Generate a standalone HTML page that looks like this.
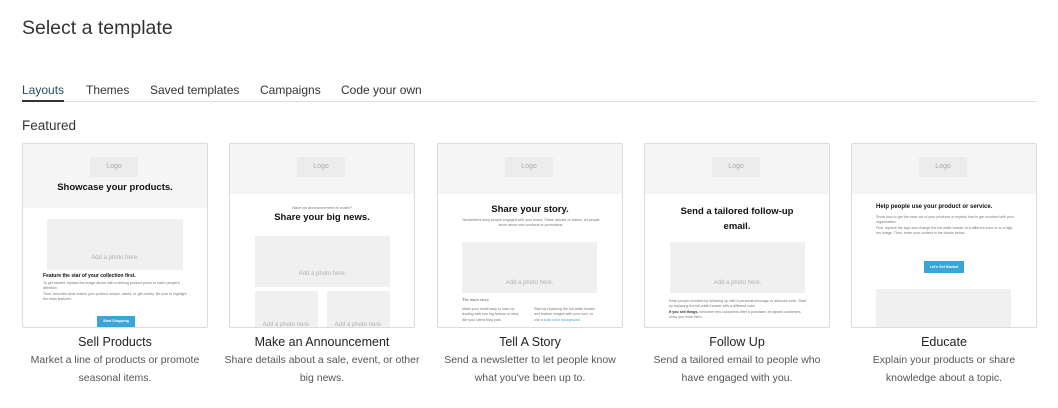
<!DOCTYPE html>
<html><head><meta charset="utf-8"><style>
*{box-sizing:border-box;margin:0;padding:0}
body{width:1058px;height:408px;background:#fff;font-family:"Liberation Sans",sans-serif;color:#333;position:relative;overflow:hidden}
h1{position:absolute;left:22px;top:17px;font-size:19.5px;font-weight:normal;color:#333}
.tabs{position:absolute;left:22px;top:83px;font-size:12px;color:#333}
.tabs span{position:absolute;white-space:nowrap}
.line{position:absolute;left:22px;top:101px;width:1014px;height:1px;background:#ddd}
.ul{position:absolute;left:22px;top:100px;width:42px;height:2px;background:#333}
.feat{position:absolute;left:22px;top:118px;font-size:13.5px;color:#333}
.card{position:absolute;top:143px;width:186px;height:185px;border:1px solid #dcdcdc;border-radius:2px;overflow:hidden;background:#fff;box-shadow:0 0 1px #eee}
.hd{position:absolute;left:0;top:0;width:100%;height:50px;background:#f5f5f5}
.logo{position:absolute;left:67px;top:13px;width:48px;height:20px;background:#ececec;color:#aaa;font-size:7px;text-align:center;line-height:20px}
.t{position:absolute;left:0;width:100%;text-align:center;font-weight:bold;color:#111}
.ph{position:absolute;background:#f0f0f0;color:#b0b0b0;font-size:6px;text-align:center}
.small{position:absolute;font-size:3.6px;color:#777;line-height:5.3px}
.btn{position:absolute;background:#3aa5d8;color:#fff;font-size:3.6px;font-weight:bold;text-align:center}
.cap{position:absolute;top:333px;width:186px;text-align:center}
.cap b{display:block;font-weight:normal;font-size:12.5px;color:#222;line-height:18px}
.cap p{font-size:10.5px;color:#555;line-height:18px}
</style></head><body>
<h1>Select a template</h1>
<div class="tabs">
<span style="left:0;color:#1f4f5d">Layouts</span>
<span style="left:64px">Themes</span>
<span style="left:128px">Saved templates</span>
<span style="left:238px">Campaigns</span>
<span style="left:319px">Code your own</span>
</div>
<div class="line"></div><div class="ul"></div>
<div class="feat">Featured</div>

<div class="card" style="left:22px">
<div class="hd" style="height:64px"></div><div class="logo">Logo</div>
<div class="t" style="top:38px;font-size:9.5px">Showcase your products.</div>
<div class="ph" style="left:24px;top:75px;width:136px;height:51px;padding-top:36px">Add a photo here.</div>
<div style="position:absolute;left:20px;top:129px;font-size:5px;font-weight:bold;color:#111">Feature the star of your collection first.</div>
<div class="small" style="left:20px;top:137px;width:145px">To get started, replace the image above with a striking product photo to catch people's attention.<br>Then, describe what makes your product unique, useful, or gift-worthy. Be sure to highlight the main features.</div>
<div class="btn" style="left:74px;top:172px;width:38px;height:11px;line-height:11px">Start Shopping</div>
</div>

<div class="card" style="left:229px">
<div class="hd"></div><div class="logo">Logo</div>
<div style="position:absolute;top:61px;width:100%;text-align:center;font-size:4px;font-style:italic;color:#777">Have an announcement to make?</div>
<div class="t" style="top:68px;font-size:9.5px">Share your big news.</div>
<div class="ph" style="left:25px;top:92px;width:135px;height:51px;padding-top:35px">Add a photo here.</div>
<div class="ph" style="left:25px;top:147px;width:63px;height:40px;padding-top:31px">Add a photo here.</div>
<div class="ph" style="left:97px;top:147px;width:63px;height:40px;padding-top:31px">Add a photo here.</div>
</div>

<div class="card" style="left:437px">
<div class="hd"></div><div class="logo">Logo</div>
<div class="t" style="top:60px;font-size:9.5px">Share your story.</div>
<div class="small" style="left:20px;top:74px;width:146px;text-align:center">Newsletters keep people engaged with your brand. Share articles or videos, let people know about new products or promotions.</div>
<div class="ph" style="left:24px;top:98px;width:135px;height:51px;padding-top:38px">Add a photo here.</div>
<div style="position:absolute;left:24px;top:153px;font-size:4.5px;font-style:italic;color:#555;font-family:'Liberation Serif',serif">The main story</div>
<div class="small" style="left:24px;top:163px;width:62px">Make your email easy to scan by leading with one big feature or idea, like your latest blog post.</div>
<div class="small" style="left:96px;top:163px;width:64px">Start by replacing the full-width header and feature images with your own, or use a <span style="color:#3aa5d8">solid color background</span>.</div>
</div>

<div class="card" style="left:644px">
<div class="hd"></div><div class="logo">Logo</div>
<div class="t" style="top:60px;font-size:9.5px;line-height:15px">Send a tailored follow-up<br>email.</div>
<div class="ph" style="left:25px;top:98px;width:135px;height:51px;padding-top:38px">Add a photo here.</div>
<div class="small" style="left:24px;top:155px;width:140px">Keep people involved by following up with a personal message or discount code. Start by replacing the full-width header with a different color.<br><b style="color:#333">If you sell things,</b> welcome new customers after a purchase, let lapsed customers know you miss them.</div>
</div>

<div class="card" style="left:851px">
<div class="hd"></div><div class="logo">Logo</div>
<div class="t" style="top:60px;font-size:6px;text-align:left;left:24px">Help people use your product or service.</div>
<div class="small" style="left:24px;top:71px;width:140px">Show how to get the most out of your products or explain how to get involved with your organization.<br>First, replace the logo and change the full-width header to a different color or to a high-res image. Then, enter your content in the blocks below.</div>
<div class="btn" style="left:72px;top:117px;width:40px;height:12px;line-height:12px">Let's Get Started</div>
<div class="ph" style="left:24px;top:145px;width:135px;height:45px;padding-top:39px">Add a photo here.</div>
</div>

<div class="cap" style="left:22px"><b>Sell Products</b><p>Market a line of products or promote seasonal items.</p></div>
<div class="cap" style="left:222px;width:200px"><b>Make an Announcement</b><p>Share details about a sale, event, or other big news.</p></div>
<div class="cap" style="left:437px"><b>Tell A Story</b><p>Send a newsletter to let people know what you've been up to.</p></div>
<div class="cap" style="left:644px"><b>Follow Up</b><p>Send a tailored email to people who have engaged with you.</p></div>
<div class="cap" style="left:851px"><b>Educate</b><p>Explain your products or share knowledge about a topic.</p></div>
</body></html>
